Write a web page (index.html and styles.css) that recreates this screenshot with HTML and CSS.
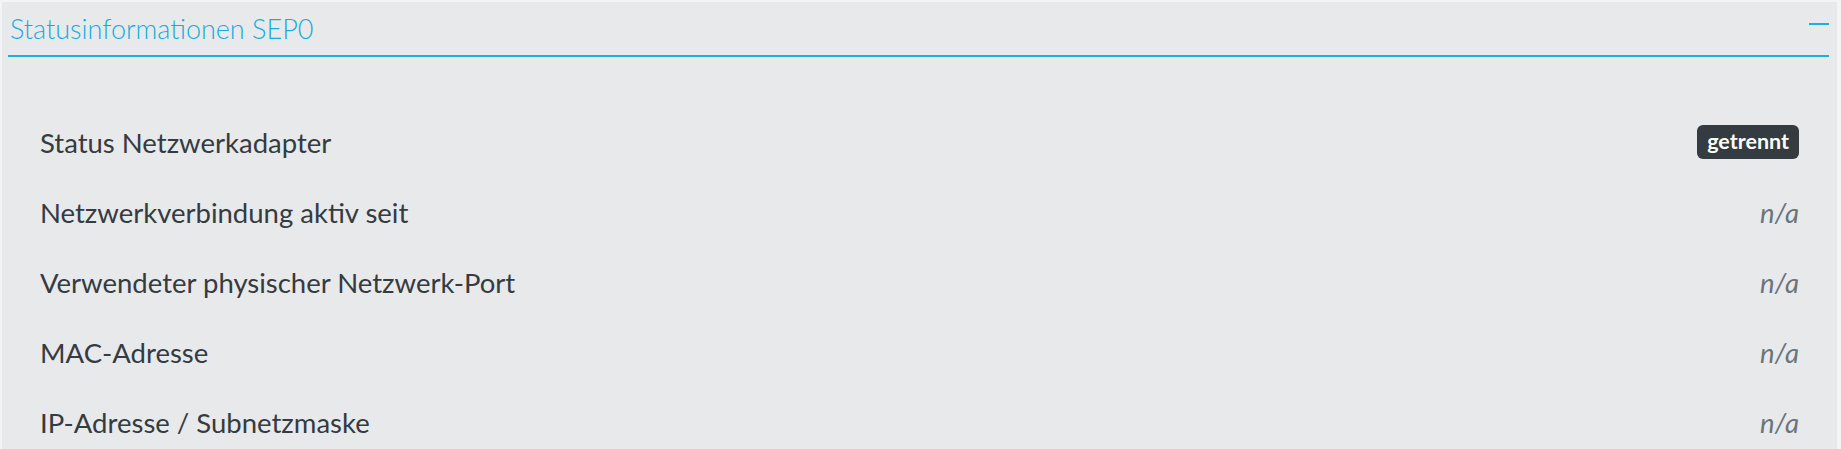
FILE: index.html
```html
<!DOCTYPE html>
<html lang="de">
  <head>
    <meta charset="UTF-8" />
    <meta name="viewport" content="width=device-width, initial-scale=1.0" />
    <title>Statusinformationen SEP0</title>
    <link rel="stylesheet" href="styles.css">
  </head>
  <body>
    <div class="panel">
      <div class="panel-header">
        <span class="panel-title">Statusinformationen SEP0</span>
        <span class="panel-toggle"></span>
      </div>
      <div class="panel-body">
        <div class="row">
          <span class="label">Status Netzwerkadapter</span>
          <span class="badge">getrennt</span>
        </div>
        <div class="row">
          <span class="label">Netzwerkverbindung aktiv seit</span>
          <span class="value">n/a</span>
        </div>
        <div class="row">
          <span class="label">Verwendeter physischer Netzwerk-Port</span>
          <span class="value">n/a</span>
        </div>
        <div class="row">
          <span class="label">MAC-Adresse</span>
          <span class="value">n/a</span>
        </div>
        <div class="row">
          <span class="label">IP-Adresse / Subnetzmaske</span>
          <span class="value">n/a</span>
        </div>
      </div>
    </div>
  </body>
</html>
```

FILE: styles.css
```css
/* General styles */
body {
  margin: 0;
  padding: 2px 4px 0 2px;
  height: 449px;
  box-sizing: border-box;
  overflow: hidden;
  background-color: #f3f4f5;
  font-family: "Lato", "Open Sans", sans-serif;
  color: #343b41;
}

.panel {
  background-color: #e8e9eb;
  height: 100%;
}

/* Header */
.panel-header {
  display: flex;
  align-items: center;
  justify-content: space-between;
  height: 53px;
  margin: 0 8px 0 6px;
  padding: 0 0 0 2px;
  border-bottom: 2px solid #1ab0e0;
}

.panel-title {
  font-size: 27px;
  font-weight: 300;
  color: #14ade0;
}

.panel-toggle {
  width: 20px;
  height: 2px;
  margin-top: -10px;
  background-color: #1ab0e0;
}

/* Rows */
.panel-body {
  padding-top: 50px;
}

.row {
  display: flex;
  align-items: center;
  justify-content: space-between;
  height: 70px;
  padding: 0 38px;
}

.label {
  font-size: 27.5px;
}

.value {
  font-size: 27.5px;
  font-style: italic;
  color: #6b747b;
}

.badge {
  padding: 3px 10px 5px;
  border-radius: 6px;
  background-color: #343b41;
  color: #fff;
  font-size: 21.5px;
  font-weight: bold;
}
```
